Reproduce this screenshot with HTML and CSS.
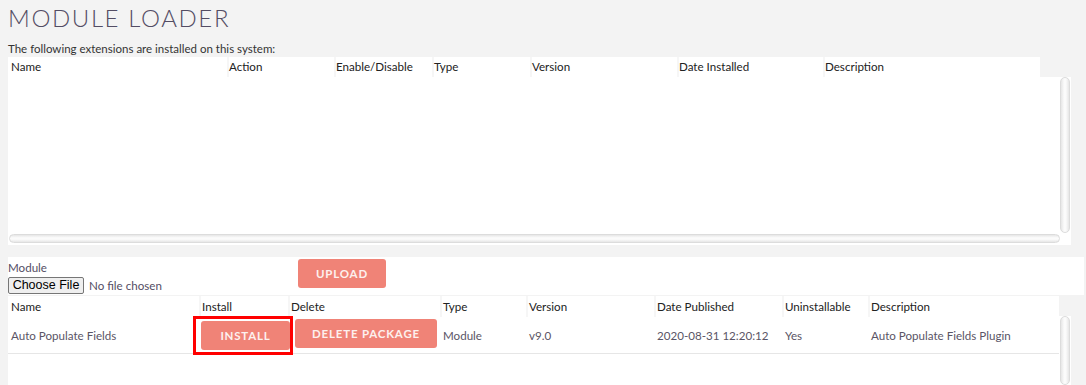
FILE: index.html
```html
<!DOCTYPE html>
<html lang="en">
<head>
    <meta charset="UTF-8">
    <title>Module Loader</title>
    <link rel="stylesheet" href="styles.css">
</head>
<body>
    <h1 class="title">MODULE LOADER</h1>
    <p class="intro">The following extensions are installed on this system:</p>

    <div class="installed">
        <div class="installed-head">
            <div class="cell">Name</div>
            <div class="cell">Action</div>
            <div class="cell">Enable/Disable</div>
            <div class="cell">Type</div>
            <div class="cell">Version</div>
            <div class="cell">Date Installed</div>
            <div class="cell">Description</div>
        </div>
        <div class="installed-body">
            <div class="installed-rows"></div>
            <div class="vscroll"></div>
        </div>
        <div class="hscroll-row">
            <div class="hscroll"></div>
        </div>
    </div>

    <div class="upload">
        <div class="upload-file">
            <label class="upload-label">Module</label>
            <div class="file-field">
                <span class="file-btn">Choose File</span>
                <span class="file-name">No file chosen</span>
            </div>
        </div>
        <button class="btn upload-btn">Upload</button>
    </div>

    <div class="packages">
        <div class="packages-main">
            <div class="packages-head">
                <div class="cell">Name</div>
                <div class="cell">Install</div>
                <div class="cell">Delete</div>
                <div class="cell">Type</div>
                <div class="cell">Version</div>
                <div class="cell">Date Published</div>
                <div class="cell">Uninstallable</div>
                <div class="cell">Description</div>
            </div>
            <div class="packages-row">
                <div class="cell">Auto Populate Fields</div>
                <div class="cell"><button class="btn install-btn">Install</button></div>
                <div class="cell"><button class="btn delete-btn">Delete Package</button></div>
                <div class="cell">Module</div>
                <div class="cell">v9.0</div>
                <div class="cell">2020-08-31 12:20:12</div>
                <div class="cell">Yes</div>
                <div class="cell">Auto Populate Fields Plugin</div>
            </div>
        </div>
        <div class="packages-side">
            <div class="side-top"></div>
            <div class="side-body"><div class="vscroll"></div></div>
        </div>
    </div>
</body>
</html>
```

FILE: styles.css
```css
* {
    box-sizing: border-box;
    font-family: Lato, "Open Sans", sans-serif;
}

body {
    margin: 0;
    padding: 0 0 0 8px;
    background-color: #f3f3f3;
    height: 385px;
    overflow: hidden;
}

.title {
    margin: 0;
    padding-top: 3px;
    font-size: 24px;
    line-height: 30px;
    font-weight: 300;
    letter-spacing: 1.6px;
    color: #534d64;
}

.intro {
    margin: 9px 0 1px 0;
    font-size: 11.5px;
    line-height: 14px;
    color: #333;
}

.cell {
    padding-left: 3px;
    font-size: 11.6px;
    white-space: nowrap;
}

/* installed extensions */
.installed {
    width: 1063px;
    background-color: #ffffff;
}

.installed-head {
    display: grid;
    grid-template-columns: 219px 107px 98px 98px 147px 146px 217px 1fr;
    height: 20px;
    line-height: 20px;
    color: #222;
}

.installed-head .cell {
    padding-left: 0;
    background-color: #fff;
    border-left: 2px solid #f6f6f6;
}

.installed-head .cell:first-child {
    padding-left: 3px;
    border-left: none;
}

.installed-head::after {
    content: "";
    background-color: #f3f3f3;
}

.installed-body {
    display: flex;
    height: 156px;
}

.installed-rows {
    flex: 1;
}

.vscroll {
    width: 10px;
    margin-right: 1px;
    border: 1px solid #dcdcdc;
    border-radius: 6px;
    background: linear-gradient(to right, #e6e6e6, #fbfbfb 40%, #fbfbfb 60%, #e6e6e6);
}

.hscroll-row {
    height: 12px;
    padding: 1px 11px 2px 1px;
}

.hscroll {
    height: 9px;
    border: 1px solid #dcdcdc;
    border-radius: 6px;
    background: linear-gradient(to bottom, #e6e6e6, #fbfbfb 40%, #fbfbfb 60%, #e6e6e6);
}

/* upload */
.upload {
    display: flex;
    align-items: flex-start;
    width: 1076px;
    height: 38px;
    margin-top: 12px;
    background-color: #fff;
}

.upload-file {
    width: 290px;
    padding-top: 4px;
}

.upload-label {
    display: block;
    font-size: 11.6px;
    line-height: 14px;
    color: #534d64;
}

.file-field {
    display: flex;
    align-items: center;
    margin-top: 2px;
}

.file-btn {
    width: 76px;
    height: 17px;
    line-height: 15px;
    text-align: center;
    font-family: "Liberation Sans", Arial, sans-serif;
    font-size: 12.5px;
    color: #000;
    background-color: #efefef;
    border: 1px solid #767676;
    border-radius: 2px;
}

.file-name {
    margin-left: 5px;
    font-size: 11.6px;
    color: #534d64;
}

.btn {
    border: none;
    border-radius: 3px;
    background-color: #f08377;
    color: #fdf0ee;
    font-size: 11.5px;
    font-weight: 700;
    letter-spacing: 0.8px;
    text-transform: uppercase;
    cursor: pointer;
    padding: 0;
}

.upload-btn {
    width: 88px;
    height: 29px;
    margin-top: 2px;
}

/* packages */
.packages {
    display: flex;
    width: 1063px;
    margin-top: 1px;
    height: 89px;
    background-color: #fff;
}

.packages-main {
    width: 1051px;
}

.packages-head {
    display: grid;
    grid-template-columns: 191px 89px 152px 86px 128px 128px 86px 191px;
    height: 21px;
    line-height: 21px;
    color: #222;
}

.packages-head .cell {
    padding-left: 1px;
    border-left: 2px solid #f6f6f6;
}

.packages-head .cell:first-child {
    padding-left: 3px;
    border-left: none;
}

.packages-row {
    display: grid;
    grid-template-columns: 191px 89px 152px 86px 128px 128px 86px 191px;
    align-items: center;
    height: 37px;
    border-bottom: 1px solid #e6e6e6;
    color: #5a5566;
}

.packages-row .cell:nth-child(2),
.packages-row .cell:nth-child(3) {
    padding-left: 2px;
    height: 36px;
}

.install-btn {
    position: relative;
    width: 89px;
    height: 29px;
    margin-top: 4px;
}

/* red highlight around the install button */
.install-btn::after {
    content: "";
    position: absolute;
    left: -8px;
    right: -3px;
    top: -5px;
    bottom: -5px;
    border: 3px solid #f00;
}

.delete-btn {
    width: 142px;
    height: 29px;
    margin-top: 2px;
    margin-left: 5px;
}

.packages-side {
    width: 12px;
    display: flex;
    flex-direction: column;
}

.side-top {
    height: 20px;
    background-color: #f3f3f3;
}

.side-body {
    flex: 1;
    display: flex;
    padding-left: 1px;
}
```
